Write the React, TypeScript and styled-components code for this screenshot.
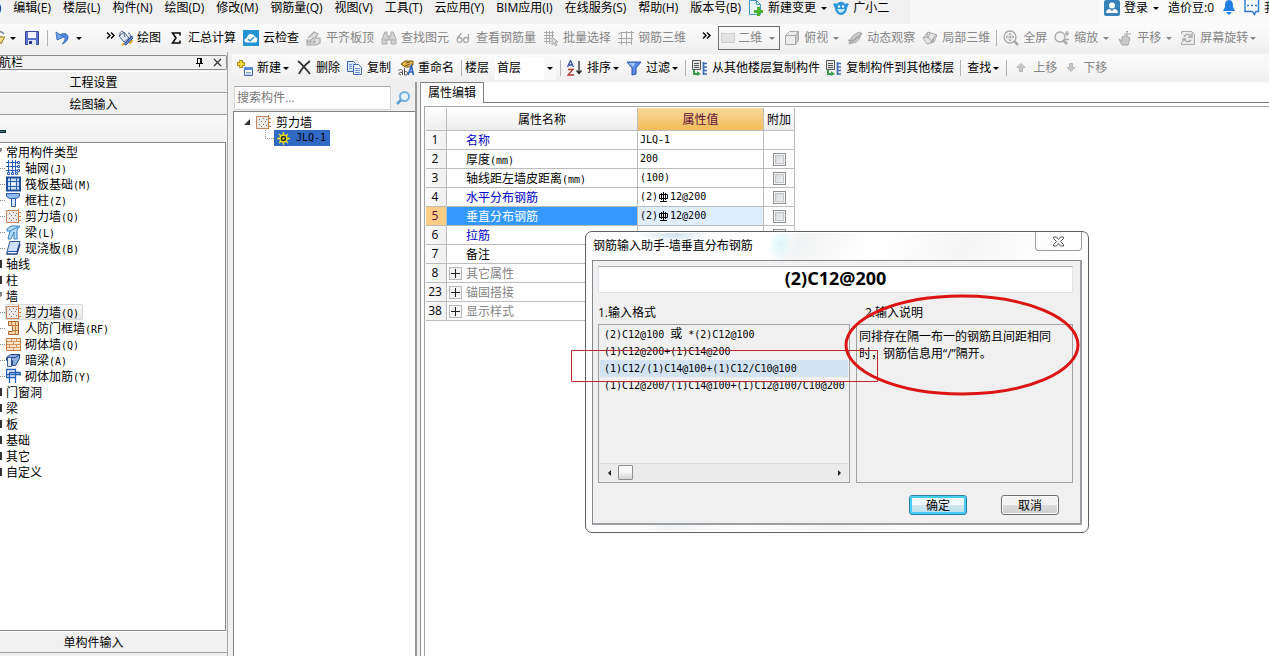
import React from 'react';
import styled, { createGlobalStyle, css } from 'styled-components';

const ui = `"Open Sans", "Noto Sans CJK SC", sans-serif`;

const GlobalStyle = createGlobalStyle`
  * { box-sizing: border-box; }
  body { margin: 0; background: #f0f0f0; overflow: hidden; }
  button, input, select { font: inherit; color: inherit; margin: 0; padding: 0; border: 0; background: none; }
  ul { list-style: none; margin: 0; padding: 0; }
  svg { display: block; flex: none; }
`;

const Shell = styled.div`
  position: relative;
  display: flex;
  flex-direction: column;
  height: 100vh;
  overflow: hidden;
  background: #f0f0f0;
  color: #000;
  font: 12px/16px ${ui};
  white-space: nowrap;
`;

const Latin = styled.span`
  font-family: "DejaVu Sans Mono", monospace;
  font-size: 10px;
  white-space: pre;
`;
const Label = styled.span`
  padding-top: 2px;
`;

/* ---------- menu ---------- */
const MenuBar = styled.nav`
  display: flex;
  flex: none;
  height: 24px;
`;
const MenuGroup = styled.div`
  display: flex;
  align-items: center;
  gap: 12px;
  height: 16px;
  margin-left: -36px;
`;
const MenuTools = styled.div`
  display: flex;
  align-items: center;
  gap: 5px;
  height: 16px;
  padding: 0 21px 0 7px;
`;
const MenuFill = styled.div`
  flex: 1;
  background: #f7f7f7;
`;
const Account = styled.div`
  display: flex;
  align-items: center;
  gap: 8px;
  flex: none;
  width: 171px;
  padding: 0 0 8px 6px;
  overflow: hidden;
  background: #f9f9f9;
`;
const Messages = styled.button`
  display: flex;
  align-items: center;
  gap: 4px;
  height: 16px;
`;
const MenuButton = styled.button`
  display: flex;
  align-items: center;
  gap: 4px;
  flex: none;
  height: 16px;
`;

/* ---------- toolbars ---------- */
const Bar = styled.div`
  display: flex;
  align-items: center;
  flex: none;
  height: 28px;
  background: linear-gradient(#fbfbfb, #f5f5f5 60%, #eeeeee);
`;
const FileBar = styled.div`
  display: flex;
  align-items: center;
  flex: none;
  gap: 7px;
  width: 117px;
  height: 28px;
  margin-left: -11px;
  margin-right: 11px;
`;
const Tools = styled.div`
  display: flex;
  align-items: center;
  flex: none;
  gap: 7px;
`;
const SplitTools = styled(Tools)`
  gap: 6px;
`;
const PartTools = styled(Tools)`
  padding: 0 3px 0 4px;
`;
const ListTools = styled(Tools)`
  gap: 6px;
  padding-left: 4px;
`;
const ToolButton = styled.button<{ $muted?: boolean; $tight?: boolean }>`
  display: flex;
  align-items: center;
  flex: none;
  gap: 4px;
  height: 22px;
  color: ${p => (p.$muted ? '#868686' : '#000')};
  ${p => p.$muted && css`svg { color: #a9a9a9; }`}
  ${p => p.$tight && css`i { margin-left: -2px; }`}
`;
const Caret = styled.i`
  flex: none;
  width: 0;
  height: 0;
  margin: 1px 1px 0;
  border: 3px solid transparent;
  border-top-color: currentColor;
  border-bottom: 0;
`;
const Sep = styled.span`
  flex: none;
  width: 1px;
  height: 16px;
  background: #b4b4b4;
`;
const More = styled.button`
  flex: none;
  width: 25px;
  height: 18px;
  padding: 0 0 6px 16px;
`;
const ViewMode = styled.label`
  display: flex;
  align-items: center;
  gap: 2px;
  width: 62px;
  height: 24px;
  margin: 0 4px 0 7px;
  padding: 0 3px 0 1px;
  border: 1px solid #6e6e6e;
  color: #868686;
`;
const PlainSelect = styled.select`
  appearance: none;
  flex: 1;
  min-width: 0;
  outline: none;
`;
const FloorPick = styled.label`
  display: flex;
  align-items: center;
  gap: 6px;
`;
const FloorBox = styled.span`
  display: flex;
  align-items: center;
  width: 61px;
  height: 23px;
  padding: 0 2px;
  background: linear-gradient(90deg, #fff 49px, #f8f8f8 49px);
`;

/* ---------- body ---------- */
const Body = styled.div`
  display: flex;
  flex: 1;
  min-height: 0;
`;
const NavPane = styled.aside`
  display: flex;
  flex-direction: column;
  flex: none;
  width: 228px;
  padding-top: 3px;
  border-right: 1px solid #a8a8a8;
`;
const NavTitle = styled.header`
  display: flex;
  align-items: center;
  height: 15px;
  border: 1px solid #8c8c8c;
  border-left: 0;
  border-radius: 0 2px 2px 0;
  margin-bottom: 1px;
`;
const NavName = styled.span`
  flex: 1;
  margin-left: -13px;
`;
const TinyButton = styled.button`
  display: grid;
  place-items: center;
  width: 18px;
  height: 12px;
`;
const NavSection = styled.button`
  flex: none;
  height: 22px;
  padding: 2px 40px 0 0;
  border-top: 1px solid #fff;
  border-bottom: 1px solid #9d9d9d;
`;
const NavStrip = styled.div`
  display: flex;
  align-items: center;
  flex: none;
  height: 27px;
  padding-top: 5px;
  background: linear-gradient(#fafafa, #f0f0f0);
`;
const StripMark = styled.i`
  width: 6px;
  height: 3px;
  border: 1px solid #123;
  border-left: 0;
  background: #2a8a7c;
`;
const NavTree = styled.ul`
  flex: 1;
  min-height: 0;
  overflow: hidden;
  margin-right: 1px;
  padding-top: 1px;
  border: 1px solid #83868c;
  border-left: 0;
  background: #fff;
`;
const Category = styled.li`
  display: flex;
  align-items: center;
  height: 16px;
  gap: 4px;
`;
const CategoryMark = styled.i<{ $open?: boolean }>`
  width: 2px;
  height: 8px;
  background: ${p => (p.$open ? 'linear-gradient(135deg, #888 50%, transparent 50%)' : '#333')};
`;
const Leaf = styled.li`
  display: flex;
  align-items: center;
  height: 16px;
`;
const Dots = styled.i`
  flex: none;
  width: 5px;
  border-top: 1px dotted #888;
`;
const LeafLabel = styled.span<{ $on?: boolean }>`
  display: flex;
  align-items: center;
  gap: 4px;
  height: 16px;
  padding: 0 4px 0 1px;
  border-radius: 2px;
  ${p => p.$on && css`
    background: linear-gradient(#fafafa, #e6e6e6);
    box-shadow: inset 0 0 0 1px #dadada;
  `}
`;

const Main = styled.main`
  display: flex;
  flex-direction: column;
  flex: 1;
  min-width: 0;
  padding: 2px 0 0 4px;
`;
const Panes = styled.div`
  display: flex;
  flex: 1;
  min-height: 0;
`;
const PartsPane = styled.section`
  display: flex;
  flex-direction: column;
  flex: none;
  width: 185px;
  border-right: 2px solid #9a9a9a;
`;
const SearchRow = styled.label`
  display: flex;
  align-items: center;
  justify-content: space-between;
  height: 29px;
  padding: 2px 4px 0 2px;
`;
const SearchInput = styled.input`
  width: 157px;
  height: 24px;
  padding: 0 2px;
  border: 1px solid #d4d4d4;
  border-top-color: #a9a9a9;
  background: #fff;
  &::placeholder { color: #777; opacity: 1; }
`;
const PartsTree = styled.ul`
  flex: 1;
  margin-left: 1px;
  padding-top: 2px;
  border: 1px solid #808080;
  border-width: 1px 0 0 1px;
  background: #fff;
`;
const PartRoot = styled.li`
  display: flex;
  align-items: center;
  gap: 5px;
  height: 16px;
  padding-left: 10px;
`;
const PartLeaf = styled.li`
  display: flex;
  height: 16px;
  padding-left: 31px;
`;
const Elbow = styled.i`
  width: 9px;
  height: 9px;
  border: 1px dotted #999;
  border-width: 0 0 1px 1px;
`;
const PartChip = styled.span`
  display: flex;
  align-items: center;
  gap: 6px;
  height: 16px;
  padding: 0 4px 0 3px;
  background: #316ac5;
`;

const PropPane = styled.section`
  display: flex;
  flex-direction: column;
  flex: 1;
  min-width: 0;
  margin-left: 3px;
  border-left: 1px solid #909090;
  background: #fff;
`;
const TabRow = styled.div`
  display: flex;
  flex: none;
  height: 21px;
  &::after { content: ""; flex: 1; border-bottom: 1px solid #808080; }
`;
const Tab = styled.button`
  width: 63px;
  height: 21px;
  background: #fff;
  border-top: 1px solid #808080;
  border-right: 1px solid #808080;
`;
const Sheet = styled.div`
  flex: 1;
  min-height: 0;
  margin: 3px 0 0 3px;
  padding: 1px;
  border: 1px solid #a6a6a6;
  border-width: 1px 0 0 1px;
`;
const Grid = styled.table`
  width: 369px;
  table-layout: fixed;
  border-collapse: separate;
  border-spacing: 0;
  th, td {
    height: 19px;
    padding: 0;
    border-right: 1px solid #bdbdbd;
    border-bottom: 1px solid #bdbdbd;
    font-weight: normal;
    line-height: 18px;
    text-align: left;
  }
  thead th { height: 23px; padding-top: 2px; text-align: center; background: linear-gradient(#fff, #ededed); }
`;
const ValueHead = styled.th`
  && { background: linear-gradient(#f8d99c, #f2bd58); color: #5e0f3c; }
`;
const RowNo = styled.th<{ $on?: boolean }>`
  && {
    text-align: center;
    padding-right: 2px;
    background: ${p => (p.$on ? '#f9cd84' : 'linear-gradient(90deg, #fbfbfb, #f0f0f0)')};
    ${p => p.$on && 'color: #5e0f3c;'}
  }
`;
const NameCell = styled.td<{ $tone?: 'link' | 'group'; $on?: boolean }>`
  color: ${p => (p.$on ? '#fff' : p.$tone === 'link' ? '#0000c8' : p.$tone === 'group' ? '#848484' : '#000')};
  background: ${p => (p.$on ? '#3399ff' : '#fff')};
`;
const NameBox = styled.div`
  display: grid;
  grid-template-columns: 19px auto;
  align-items: center;
  height: 18px;
  line-height: 16px;
`;
const Expand = styled.button`
  display: grid;
  place-items: center;
  width: 13px;
  height: 13px;
  margin-left: 2px;
  border: 1px solid #b8b8b8;
  background: #f4f4f4;
`;
const ValueCell = styled.td<{ $on?: boolean }>`
  background: ${p => (p.$on ? '#dfeefd' : '#fff')};
`;
const ValueBox = styled.div`
  display: flex;
  align-items: center;
  height: 18px;
  padding: 0 2px;
`;
const Check = styled.input`
  appearance: none;
  display: block;
  width: 13px;
  height: 13px;
  margin: 0 auto;
  border: 1px solid #8e8f8f;
  background: linear-gradient(135deg, #cfd2d6, #f6f6f6);
  box-shadow: inset 0 0 0 1px #f4f4f4, inset 0 0 0 2px #c3c6ca;
`;

/* ---------- helper window ---------- */
const Window = styled.section`
  position: absolute;
  left: 585px;
  top: 231px;
  width: 504px;
  padding: 0 6px 7px;
  border: 1px solid #5c5f63;
  border-radius: 7px;
  background:
    radial-gradient(ellipse 36px 7px at 88px 3px, #a9c8de88, transparent),
    radial-gradient(ellipse 12px 16px at 194px 12px, #c5f3f799, transparent),
    linear-gradient(115deg, #fff 30%, #f2f3f4 34%, #fff 46%, #f5f5f5 60%, #fff 75%);
  box-shadow: inset 0 0 0 1px #fff;
`;
const TitleBar = styled.header`
  display: flex;
  justify-content: space-between;
  height: 28px;
  padding-left: 1px;
  line-height: 27px;
`;
const Close = styled.button`
  display: grid;
  place-items: center;
  width: 47px;
  height: 19px;
  border: 1px solid #9a9da1;
  border-top: 0;
  border-radius: 0 0 4px 4px;
`;
const Client = styled.div`
  border: 1px solid #85888c;
  border-right: 2px solid #9b9ea2;
  border-bottom: 2px solid #9b9ea2;
  padding: 5px 7px 8px 5px;
  background: #f0f0f0;
`;
const Formula = styled.input`
  display: block;
  width: 100%;
  height: 27px;
  padding-bottom: 3px;
  border: 1px solid #e2e3ea;
  border-top-color: #abadb3;
  background: #fff;
  text-align: center;
  font: bold 18px/22px "Noto Sans", sans-serif;
`;
const Columns = styled.div`
  display: grid;
  grid-template-columns: 252px 1fr;
  column-gap: 6px;
`;
const Caption = styled.h2<{ $inset?: boolean }>`
  margin: 0;
  padding: 12px 0 3px ${p => (p.$inset ? 9 : 0)}px;
  font: 12px/16px ${ui};
`;
const FormatBox = styled.div`
  display: flex;
  flex-direction: column;
  height: 159px;
  padding: 1px;
  border: 1px solid #a0a0a0;
`;
const FormatList = styled.ul`
  flex: 1;
`;
const FormatItem = styled.li<{ $on?: boolean }>`
  height: 17px;
  padding-left: 4px;
  line-height: 15px;
  background: ${p => (p.$on ? '#d3e3f3' : 'transparent')};
`;
const Scroll = styled.div`
  display: flex;
  align-items: center;
  height: 18px;
  border-top: 1px solid #dcdcdc;
  background: #ebebeb;
`;
const ScrollEnd = styled.button`
  display: grid;
  place-items: center;
  width: 18px;
  height: 16px;
`;
const Track = styled.div`
  flex: 1;
`;
const Thumb = styled.div`
  width: 15px;
  height: 15px;
  border: 1px solid #8f8f8f;
  border-radius: 1px;
  background: linear-gradient(#f8f8f8 45%, #d2d2d2);
`;
const Note = styled.p`
  margin: 0;
  padding: 3px 2px;
  border: 1px solid #a0a0a0;
  line-height: 17px;
  white-space: normal;
`;
const Actions = styled.footer`
  display: flex;
  justify-content: flex-end;
  gap: 34px;
  padding: 12px 14px 0 0;
`;
const PushButton = styled.button<{ $primary?: boolean }>`
  width: 58px;
  height: 20px;
  padding-top: 1px;
  line-height: 17px;
  border: 1px solid ${p => (p.$primary ? '#2c7fa8' : '#707070')};
  border-radius: 3px;
  background: ${p => (p.$primary
    ? 'linear-gradient(#f0f8fc 48%, #cfe6f2 52%, #bcdfee)'
    : 'linear-gradient(#f2f2f2 48%, #dcdcdc 52%, #cfcfcf)')};
  box-shadow: inset 0 0 0 ${p => (p.$primary ? '2px #45cdf5' : '1px #fbfbfb')};
`;
const Markup = styled.svg`
  position: absolute;
  left: 565px;
  top: 290px;
  pointer-events: none;
`;

/* ---------- icons ---------- */
const Svg = ({ children, w = 16, h = 16 }: { children: React.ReactNode; w?: number; h?: number }) => (
  <svg width={w} height={h} viewBox={`0 0 ${w} ${h}`} fill="none" aria-hidden="true">{children}</svg>
);

const icons = {
  folder: <Svg><path d="M1 13V5h5l1 2h6v6z" fill="#efc454" stroke="#a27a1c" /><path d="M1 13l4-6h11l-4 6z" fill="#fbe08c" stroke="#a27a1c" /><path d="M9 4c1-3 4-3 6 0" stroke="#6b7a9c" strokeWidth="1.300" /></Svg>,
  save: <Svg><path d="M1.500 1.500h13v13h-13z" fill="#5a72cc" stroke="#34489c" /><path d="M4 2h8v6H4z" fill="#f1f5ff" /><path d="M4 10h8v5H4z" fill="#e0e6f6" /><path d="M5 11h3v3H5z" fill="#23367e" /></Svg>,
  undo: <Svg><path d="M4 6c3-4 10-3 9 2-.5 3-3 5-6 6 2-2 3-4 3-6-1-2-3-2-4 0z" fill="#4d86d8" stroke="#3566b4" strokeWidth=".8" /><path d="M1 2l1 8 7-3z" fill="#6ea2ea" stroke="#3566b4" strokeWidth=".8" /></Svg>,
  draw: <Svg><path d="M2 6l5-4 5 6-5 4z" fill="#dfe7f5" stroke="#50648c" /><path d="M3 6c-1-5 3-6 4-3l1 4" stroke="#50648c" /><path d="M15 6l-6 6-3 2 3 1 7-7z" fill="#5d86cf" stroke="#2e539a" /><path d="M4 15l2-2 2 1-2 2z" fill="#e3b12f" /><path d="M11 3c2 0 3 2 2 5" stroke="#3f5f9a" /><path d="M12 13c1 0 3-1 3-3" stroke="#d8a526" strokeWidth="2" /></Svg>,
  sum: <Svg><path d="M12 5.500V3H4.500L8 8l-3.500 5H12v-2.500" stroke="#000" strokeWidth="1.500" /></Svg>,
  cloud: <Svg><path d="M0 0h16v16H0z" fill="#2493d3" /><path d="M4 12.500c-3.500 0-3.500-4.500 0-4.500 0-5 7-5 8-1 3 0 3 5.500 0 5.500z" fill="#fff" /><path d="M5 9l2 2 4-4" stroke="#2493d3" strokeWidth="1.400" /></Svg>,
  align: <Svg><path d="M2 8l6-6 4 2-3 4M1 10h4l2-2h7v5l-4 2H1z" fill="#ddd" stroke="currentColor" strokeWidth="1.200" /><path d="M4 10v5M8 9v5M1 12h9" stroke="currentColor" /></Svg>,
  binoculars: <Svg><path d="M4 2h2v4h4V2h2l3 7v5h-5v-4H6v4H1V9z" fill="#d3d3d3" stroke="currentColor" /><path d="M2 10h4M10 10h4M8 6v4" stroke="currentColor" /></Svg>,
  glasses: <Svg><circle cx="3.500" cy="10" r="2.500" stroke="currentColor" strokeWidth="1.300" /><circle cx="10" cy="10" r="2.500" stroke="currentColor" strokeWidth="1.300" /><path d="M1.500 8l4-5M12.500 9V4" stroke="currentColor" strokeWidth="1.300" /></Svg>,
  batch: <Svg><path d="M1 2.500h10M1 5.500h10M1 8.500h7M1 11.500h7M3.500 1v13M6.500 1v13M9.500 1v6" stroke="currentColor" /><path d="M9 7v8l2-2 2 3 1-1-2-3h3z" fill="#ddd" stroke="currentColor" /></Svg>,
  mesh: <Svg><path d="M0 4.500l3-2h13M0 8.500h15M0 12.500h14M3.500 2v13M8.500 1v14M13.500 1v14" stroke="currentColor" /></Svg>,
  plane: <Svg><path d="M1.500 3.500h13v9h-13z" fill="#e2e2e2" stroke="#cbcbcb" /></Svg>,
  cube: <Svg><path d="M1.500 5.500l4-4h9l-3 4zM1.500 5.500h10v9h-10z" fill="#ececec" stroke="currentColor" /><path d="M11.500 5.500l3-4v9l-3 4z" fill="#c6c6c6" stroke="currentColor" /></Svg>,
  orbit: <Svg><path d="M2 14c1-6 4-10 11-12 2 5-2 11-8 11" fill="#ccc" stroke="currentColor" /><path d="M1 10c4 2 10-1 14-7M3 14l8-8" stroke="currentColor" strokeWidth="1.500" /></Svg>,
  local: <Svg><path d="M1 8l5-6 9 3-3 7-7 2z" fill="#e5e5e5" stroke="currentColor" /><path d="M6 2l-1 5 6 5 1-5 3-2M5 7l-4 1M8 3l-2 5M12 7l-4 7" stroke="currentColor" /></Svg>,
  full: <Svg><circle cx="7" cy="7" r="6" stroke="currentColor" strokeWidth="1.300" /><path d="M7 3v8M3 7h8M5.500 4.500L7 3l1.500 1.500M5.500 9.500L7 11l1.500-1.500M4.500 5.500L3 7l1.500 1.500M9.500 5.500L11 7 9.500 8.500" stroke="currentColor" /><path d="M11 11l4 4" stroke="currentColor" strokeWidth="2.500" /></Svg>,
  zoom: <Svg><circle cx="6" cy="7" r="5" fill="#f2f2f2" stroke="currentColor" strokeWidth="1.300" /><path d="M9 10l4 4" stroke="currentColor" strokeWidth="2.500" /><path d="M13 1v5M11 3.500h4M11 9.500h4" stroke="currentColor" strokeWidth="1.300" /></Svg>,
  pan: <Svg><path d="M2 9l3 2V7c3-2 6-1 8 1l-2 7H5z" fill="#c9c9c9" stroke="currentColor" /><path d="M10 1v6M7 4h7M9 2l1-1 1 1" stroke="currentColor" /></Svg>,
  rotate: <Svg><path d="M1.500 4V1.500h10l3 3v10h-13V12" fill="#ebebeb" stroke="currentColor" /><path d="M11 6a4 4 0 0 0-7 1M4 9a4 4 0 0 0 7 1M12 3v4H8M3 12V9h3" stroke="currentColor" strokeWidth="1.300" /></Svg>,
  create: <Svg w={17}><path d="M3.500.5h3v2h2v3h-2v2h-3v-2h-2v-3h2z" fill="#f5dc3c" stroke="#a68a10" /><path d="M8.500 7.500h8v8h-8z" fill="#fff" stroke="#3b65b5" /><path d="M8 7h9v3H8z" fill="#5b8ad6" /><path d="M10 12.500h5M10 14h5" stroke="#88a8dc" /></Svg>,
  remove: <Svg w={15}><path d="M1 1c4 3 8 8 12 13M13 1C8 5 4 9 2 14" stroke="#333" strokeWidth="1.700" /></Svg>,
  copy: <Svg><path d="M.5 1.500h6l2 2v8h-8z" fill="#dbe7fa" stroke="#3f68b4" /><path d="M6.500 4.500h5l3 3v7h-8z" fill="#eef4ff" stroke="#3f68b4" /><path d="M8 8.500h5M8 10.500h5M8 12.500h5M2 4.500h3M2 6.500h3M2 8.500h3" stroke="#6c94d8" /></Svg>,
  rename: <Svg><path d="M3 4l4-3h8v4l-4 2H7z" fill="#e5b84b" stroke="#7d5a16" /><path d="M8 3l4-1M7 6l5-2" stroke="#7d5a16" /><path d="M.5 11c0-2 4-2 4 0v4M4 12.500c-4-1-4 3-1 2" stroke="#555" /><path d="M6.500 8v7c4 1 4-5 0-3" stroke="#555" /><path d="M10 15l3.500-9 2 9M11 12h4" stroke="#2b5fc0" strokeWidth="1.600" /></Svg>,
  sort: <Svg><path d="M.5 7L3.500.5 6.500 7M2 5h3" stroke="#3552a8" strokeWidth="1.300" /><path d="M1 9.500h5l-5 5.500h6" stroke="#b3382c" strokeWidth="1.300" /><path d="M12 1v12M9.500 10.500l2.500 3 2.500-3" stroke="#222" strokeWidth="1.300" /></Svg>,
  filter: <Svg><path d="M1 2h14L10 8v6l-4 1V8z" fill="#5b8ee8" stroke="#2a55b0" /><path d="M3 3h6L7 7z" fill="#a9c6f7" /></Svg>,
  floors: <Svg><path d="M.5.5h8v9h-8z" fill="#e6e6e6" stroke="#555" /><path d="M2 3.500h5M2 5.500h5M2 7.500h5" stroke="#555" /><path d="M11.500 2v13M11 3.500h4M11 7h4M11 10.500h4M11 14h4" stroke="#3f6db4" strokeWidth="1.700" /><path d="M3 10v3h2v-2l4 3-4 2v-1H1v-5z" fill="#35a048" /></Svg>,
  up: <Svg><path d="M8 3.500l4 4H9.500v4h-3v-4H4z" fill="#c9c9c9" stroke="#b6b6b6" /></Svg>,
  down: <Svg><path d="M8 11.500l4-4H9.500v-4h-3v4H4z" fill="#c9c9c9" stroke="#b6b6b6" /></Svg>,
  change: <Svg><path d="M1.500.5h7l4 4v10h-11z" fill="#eaf6fd" stroke="#4598c8" /><path d="M8.500.5v4h4" stroke="#4598c8" /><path d="M9 7h3v3h3v3h-3v3H9v-3H6v-3h3z" fill="#4db02e" /></Svg>,
  mascot: <Svg><path d="M0 4c2-1 3-1 4 0 2-3 6-3 8 0 1-1 2-1 4 0l-2 4c0 4-3 7-6 7s-6-3-6-7z" fill="#2a96dd" /><path d="M4 9c2 5 6 5 8 0z" fill="#bfe6fa" /><circle cx="6" cy="6.500" r="1.200" fill="#fff" /><circle cx="10" cy="6.500" r="1.200" fill="#fff" /></Svg>,
  user: <Svg><rect width="16" height="16" rx="2" fill="#3583b8" /><circle cx="8" cy="5.500" r="3" fill="#fff" /><path d="M2 13c0-3 2-4 4-4l2 2 2-2c2 0 4 1 4 4z" fill="#fff" /></Svg>,
  bell: <Svg w={14}><path d="M7 0c4 0 4 4 4 7l2 4H1l2-4c0-3 0-7 4-7zM4 12h6l-3 3z" fill="#1f7fe0" /></Svg>,
  chat: <Svg><path d="M14.500 0v11.500H12l-1.500 3-2-3H1V0" stroke="#2b78d0" strokeWidth="1.400" /><path d="M3 5.500h2M7 5.500h2M11 5.500h2" stroke="#2b78d0" strokeWidth="1.500" /></Svg>,
  search: <Svg><circle cx="9.500" cy="6.500" r="4.500" fill="#e9f5fd" stroke="#74b1dd" strokeWidth="2" /><path d="M6 10l-4 4" stroke="#5a9fd4" strokeWidth="2.500" /></Svg>,
  axes: <Svg w={15}><path d="M0 2.500h11M0 6.500h11M0 10.500h11M2.500 0v13M6.500 0v13M9.500 0v13" stroke="#2b5fb5" /><path d="M11.500 1.500h2v2h-2zM11.500 5.500h2v2h-2zM11.500 9.500h2v2h-2zM1.500 12.500h2v2h-2zM5.500 12.500h2v2h-2zM9.500 12.500h2v2h-2z" fill="#fff" stroke="#2b5fb5" /></Svg>,
  raft: <Svg w={15}><path d="M1 1.500h13v13H1z" fill="#cfe0f8" stroke="#1f4f9f" strokeWidth="2" /><path d="M4.500 2v12M10.500 2v12M2 5.500h11M2 10.500h11" stroke="#2a62b8" /><path d="M6 7h3v2H6z" fill="#fff" /></Svg>,
  column: <Svg w={15}><path d="M.5 1.500h13v3l-3 2h-7l-3-2z" fill="#8fb9f0" stroke="#2a5aa8" /><path d="M5.500 6.500h4v8h-4z" fill="#d7e7fb" stroke="#2a5aa8" /></Svg>,
  wall: <Svg w={15}><path d="M.5 2.500h12v12H.5z" fill="#ece9e6" stroke="#c9855a" /><path d="M12.500 1v14M13 4.500h2M13 8.500h2M13 12.500h2" stroke="#d07a3c" /><path d="M3 5.500h1M7 4.500h1M5 7.500h1M9 7.500h1M3 10.500h1M7 10.500h1M5 12.500h1M10 11.500h1M10 5.500h1" stroke="#777" /></Svg>,
  beam: <Svg w={15}><path d="M1 5l4-3h9l-3 4v9H8V8l-3 7H2l2-8H1z" fill="#bcdcf8" stroke="#2d7fc5" /><path d="M4 7l8-4" stroke="#2d7fc5" /></Svg>,
  slab: <Svg w={15}><path d="M4 1.500h10l-3 10H1z" fill="#cfe0fa" stroke="#2a55a5" /><path d="M1 12v2h10l3-10" stroke="#1c3f88" strokeWidth="1.300" /></Svg>,
  shelter: <Svg w={15}><path d="M2.500 1.500h10v13h-10v-3h4v-6h-4z" fill="#f7d9ac" stroke="#b0622a" /><path d="M9.500 2v12M7 5.500h5M7 10.500h5M5.500 2v3" stroke="#c98044" /></Svg>,
  brick: <Svg w={15}><path d="M.5 2.500h14v12H.5z" fill="#fbe6d0" stroke="#cb7a3a" /><path d="M1 5.500h13M1 8.500h13M1 11.500h13M5.500 3v2M10.500 3v2M7.500 6v2M3.500 9v2M10.500 9v2M7.500 12v2" stroke="#d99257" /></Svg>,
  hidden: <Svg w={15}><path d="M.5 5.500l4-3h9v4l-4 7h-3v-5h-6z" fill="#8eaee0" stroke="#23457f" /><path d="M1 5.500h8.500l4-3" stroke="#23457f" /><path d="M1.500 5.500h4v9h-4z" fill="#dbe8fa" stroke="#3a5d9c" /></Svg>,
  rebar: <Svg w={15}><path d="M.5 1.500h9v8h-9zM0 6.500h15M3 4.500h11v3M3.500 4v11M9.500 4v11" stroke="#1f5fb8" strokeWidth="1.300" /></Svg>,
  gear: <Svg w={13} h={13}><circle cx="6.500" cy="6.500" r="3.500" fill="#222" stroke="#f2e21d" strokeWidth="1.500" /><path d="M6.500 0v3M6.500 10v3M0 6.500h3M10 6.500h3M2 2l2 2M9 9l2 2M11 2L9 4M4 9l-2 2" stroke="#f2e21d" strokeWidth="1.300" /><circle cx="6.500" cy="6.500" r="1.200" fill="#f2e21d" /></Svg>,
  node: <Svg w={7} h={7}><path d="M6 0v6H0z" fill="#333" /></Svg>,
  pin: <Svg w={9} h={9}><path d="M2 .5h5M2.500 0v5M5.500 0v5M6.500 0v5M1 5.500h7M4.500 6v3" stroke="#000" /></Svg>,
  x: <Svg w={9} h={9}><path d="M1 1l7 7M8 1L1 8" stroke="#333" strokeWidth="1.200" /></Svg>,
  closeX: <Svg w={13} h={11}><path d="M1.500 1h3l2 2.500L8.500 1h3v1.500l-3 3 3 3V10h-3l-2-2.500-2 2.500h-3V8.500l3-3-3-3z" fill="#fff" stroke="#55585c" /></Svg>,
  plus: <Svg w={9} h={9}><path d="M0 4.500h9M4.500 0v9" stroke="#222" /></Svg>,
  steel: <Svg w={12} h={12}><path d="M1.500 3.500h8v4h-8zM3.500 2v7M7.500 2v7M5.500 1v9M2 10.500h7" stroke="#000" /></Svg>,
  left: <Svg w={5} h={8}><path d="M4 1v6L1 4z" fill="#222" /></Svg>,
  right: <Svg w={5} h={8}><path d="M1 1v6l3-3z" fill="#222" /></Svg>,
  more: <Svg w={9} h={7}><path d="M1 .5l3 3-3 3M5 .5l3 3-3 3" stroke="#000" strokeWidth="1.400" /></Svg>,
};
type IconName = keyof typeof icons;

/* ---------- data ---------- */
const menus = ['文件(F)', '编辑(E)', '楼层(L)', '构件(N)', '绘图(D)', '修改(M)', '钢筋量(Q)', '视图(V)', '工具(T)', '云应用(Y)', 'BIM应用(I)', '在线服务(S)', '帮助(H)', '版本号(B)'];

const drawTools: [IconName, string, boolean][] = [
  ['draw', '绘图', false], ['sum', '汇总计算', false], ['cloud', '云检查', false],
  ['align', '平齐板顶', true], ['binoculars', '查找图元', true], ['glasses', '查看钢筋量', true],
  ['batch', '批量选择', true], ['mesh', '钢筋三维', true],
];

type Node = { label: string; key?: string; icon?: IconName; open?: boolean; on?: boolean };
const navNodes: Node[] = [
  { label: '常用构件类型', open: true },
  { label: '轴网', key: '(J)', icon: 'axes' },
  { label: '筏板基础', key: '(M)', icon: 'raft' },
  { label: '框柱', key: '(Z)', icon: 'column' },
  { label: '剪力墙', key: '(Q)', icon: 'wall' },
  { label: '梁', key: '(L)', icon: 'beam' },
  { label: '现浇板', key: '(B)', icon: 'slab' },
  { label: '轴线' }, { label: '柱' }, { label: '墙', open: true },
  { label: '剪力墙', key: '(Q)', icon: 'wall', on: true },
  { label: '人防门框墙', key: '(RF)', icon: 'shelter' },
  { label: '砌体墙', key: '(Q)', icon: 'brick' },
  { label: '暗梁', key: '(A)', icon: 'hidden' },
  { label: '砌体加筋', key: '(Y)', icon: 'rebar' },
  { label: '门窗洞' }, { label: '梁' }, { label: '板' }, { label: '基础' }, { label: '其它' }, { label: '自定义' },
];

type Prop = { no: number; name: string; unit?: string; tone?: 'link' | 'group'; value?: string; steel?: boolean; check?: boolean; on?: boolean };
const props: Prop[] = [
  { no: 1, name: '名称', tone: 'link', value: 'JLQ-1' },
  { no: 2, name: '厚度', unit: '(mm)', value: '200', check: true },
  { no: 3, name: '轴线距左墙皮距离', unit: '(mm)', value: '(100)', check: true },
  { no: 4, name: '水平分布钢筋', tone: 'link', value: '12@200', steel: true, check: true },
  { no: 5, name: '垂直分布钢筋', tone: 'link', value: '12@200', steel: true, check: true, on: true },
  { no: 6, name: '拉筋', tone: 'link', check: true },
  { no: 7, name: '备注', check: true },
  { no: 8, name: '其它属性', tone: 'group' },
  { no: 23, name: '锚固搭接', tone: 'group' },
  { no: 38, name: '显示样式', tone: 'group' },
];

const formats = ['(1)C12@200+(1)C14@200', '(1)C12/(1)C14@100+(1)C12/C10@100', '(1)C12@200/(1)C14@100+(1)C12@100/C10@200'];

type ToolProps = { icon?: IconName; label: string; muted?: boolean; menu?: boolean; tight?: boolean };
const Tool = ({ icon, label, muted, menu, tight }: ToolProps) => (
  <ToolButton $muted={muted} $tight={tight}>
    {icon && icons[icon]}
    {label}
    {menu && <Caret />}
  </ToolButton>
);

export default function App() {
  return (
    <Shell>
      <GlobalStyle />
      <MenuBar>
        <MenuGroup>
          {menus.map(m => <MenuButton key={m}>{m}</MenuButton>)}
        </MenuGroup>
        <MenuTools>
          <MenuButton>{icons.change}新建变更<Caret /></MenuButton>
          <MenuButton>{icons.mascot}广小二</MenuButton>
        </MenuTools>
        <MenuFill />
        <Account>
          <MenuButton>{icons.user}登录<Caret /></MenuButton>
          <span>造价豆:0</span>
          {icons.bell}
          <Messages>{icons.chat}我</Messages>
        </Account>
      </MenuBar>

      <Bar>
        <FileBar>
          <ToolButton aria-label="打开">{icons.folder}<Caret /></ToolButton>
          <ToolButton aria-label="保存">{icons.save}</ToolButton>
          <Sep />
          <ToolButton aria-label="撤销">{icons.undo}<Caret /></ToolButton>
          <More aria-label="更多">{icons.more}</More>
        </FileBar>
        <Tools>
          {drawTools.map(([icon, label, muted]) => <Tool key={label} icon={icon} label={label} muted={muted} />)}
        </Tools>
        <More aria-label="更多">{icons.more}</More>
        <ViewMode>
          {icons.plane}
          <PlainSelect aria-label="视图模式"><option>二维</option></PlainSelect>
          <Caret />
        </ViewMode>
        <SplitTools>
          <Tools>
            <Tool icon="cube" label="俯视" muted menu />
            <Tool icon="orbit" label="动态观察" muted />
            <Tool icon="local" label="局部三维" muted />
          </Tools>
          <Sep />
          <Tools>
            <Tool icon="full" label="全屏" muted />
            <Tool icon="zoom" label="缩放" muted menu />
            <Tool icon="pan" label="平移" muted menu />
            <Tool icon="rotate" label="屏幕旋转" muted menu tight />
          </Tools>
        </SplitTools>
      </Bar>

      <Body>
        <NavPane>
          <NavTitle>
            <NavName>导航栏</NavName>
            <TinyButton aria-label="固定">{icons.pin}</TinyButton>
            <TinyButton aria-label="关闭">{icons.x}</TinyButton>
          </NavTitle>
          <NavSection>工程设置</NavSection>
          <NavSection>绘图输入</NavSection>
          <NavStrip><StripMark /></NavStrip>
          <NavTree>
            {navNodes.map((n, i) => n.icon ? (
              <Leaf key={i}>
                <Dots />
                <LeafLabel $on={n.on}>
                  {icons[n.icon]}
                  <Label>{n.label}<Latin>{n.key}</Latin></Label>
                </LeafLabel>
              </Leaf>
            ) : (
              <Category key={i}><CategoryMark $open={n.open} /><Label>{n.label}</Label></Category>
            ))}
          </NavTree>
          <NavSection>单构件输入</NavSection>
          <NavFoot />
        </NavPane>

        <Main>
          <Bar>
            <PartTools>
              <Tool icon="create" label="新建" menu tight />
              <Tool icon="remove" label="删除" />
              <Tool icon="copy" label="复制" />
              <Tool icon="rename" label="重命名" />
              <Sep />
            </PartTools>
            <FloorPick>
              楼层
              <FloorBox>
                <PlainSelect><option>首层</option></PlainSelect>
                <Caret />
              </FloorBox>
            </FloorPick>
            <ListTools>
              <Sep />
              <Tool icon="sort" label="排序" menu tight />
              <Tool icon="filter" label="过滤" menu tight />
              <Sep />
              <Tool icon="floors" label="从其他楼层复制构件" />
              <Tool icon="floors" label="复制构件到其他楼层" />
              <Sep />
              <Tool label="查找" menu tight />
              <Sep />
              <Tool icon="up" label="上移" muted />
              <Tool icon="down" label="下移" muted />
            </ListTools>
          </Bar>
          <Panes>
            <PartsPane>
              <SearchRow>
                <SearchInput type="text" placeholder="搜索构件..." aria-label="搜索构件" />
                {icons.search}
              </SearchRow>
              <PartsTree>
                <PartRoot>{icons.node}{icons.wall}<Label>剪力墙</Label></PartRoot>
                <PartLeaf>
                  <Elbow />
                  <PartChip>{icons.gear}<Latin>JLQ-1</Latin></PartChip>
                </PartLeaf>
              </PartsTree>
            </PartsPane>
            <PropPane>
              <TabRow><Tab>属性编辑</Tab></TabRow>
              <Sheet>
                <Grid>
                  <colgroup>
                    <col width="21" /><col width="191" /><col width="126" /><col width="31" />
                  </colgroup>
                  <thead>
                    <tr><th /><th>属性名称</th><ValueHead>属性值</ValueHead><th>附加</th></tr>
                  </thead>
                  <tbody>
                    {props.map(p => (
                      <tr key={p.no}>
                        <RowNo $on={p.on}>{p.no}</RowNo>
                        <NameCell $tone={p.tone} $on={p.on}>
                          <NameBox>
                            {p.tone === 'group' ? <Expand aria-label="展开">{icons.plus}</Expand> : <span />}
                            <Label>{p.name}{p.unit && <Latin>{p.unit}</Latin>}</Label>
                          </NameBox>
                        </NameCell>
                        <ValueCell $on={p.on}>
                          <ValueBox>
                            {p.steel && <><Latin>(2)</Latin>{icons.steel}</>}
                            <Latin>{p.value}</Latin>
                          </ValueBox>
                        </ValueCell>
                        <td>{p.check && <Check type="checkbox" aria-label={p.name} />}</td>
                      </tr>
                    ))}
                  </tbody>
                </Grid>
              </Sheet>
            </PropPane>
          </Panes>
        </Main>
      </Body>

      <Window role="dialog" aria-label="钢筋输入助手">
        <TitleBar>
          钢筋输入助手-墙垂直分布钢筋
          <Close aria-label="关闭">{icons.closeX}</Close>
        </TitleBar>
        <Client>
          <Formula type="text" defaultValue="(2)C12@200" aria-label="钢筋" />
          <Columns>
            <Caption>1.输入格式</Caption>
            <Caption $inset>2.输入说明</Caption>
            <FormatBox>
              <FormatList>
                <FormatItem><Latin>(2)C12@100 </Latin>或<Latin> *(2)C12@100</Latin></FormatItem>
                {formats.map((f, i) => <FormatItem key={f} $on={i === 1}><Latin>{f}</Latin></FormatItem>)}
              </FormatList>
              <Scroll>
                <ScrollEnd aria-label="向左">{icons.left}</ScrollEnd>
                <Track><Thumb /></Track>
                <ScrollEnd aria-label="向右">{icons.right}</ScrollEnd>
              </Scroll>
            </FormatBox>
            <Note>同排存在隔一布一的钢筋且间距相同时，钢筋信息用“/”隔开。</Note>
          </Columns>
          <Actions>
            <PushButton $primary>确定</PushButton>
            <PushButton>取消</PushButton>
          </Actions>
        </Client>
      </Window>

      <Markup width="520" height="110" viewBox="0 0 520 110" fill="none" aria-hidden="true">
        <path d="M6.500 60.500h306v31h-306z" stroke="#b8282d" />
        <ellipse cx="397" cy="55" rx="116" ry="49" stroke="#dc1414" strokeWidth="3" />
      </Markup>
    </Shell>
  );
}

const NavFoot = styled.div`
  flex: none;
  height: 3px;
`;
